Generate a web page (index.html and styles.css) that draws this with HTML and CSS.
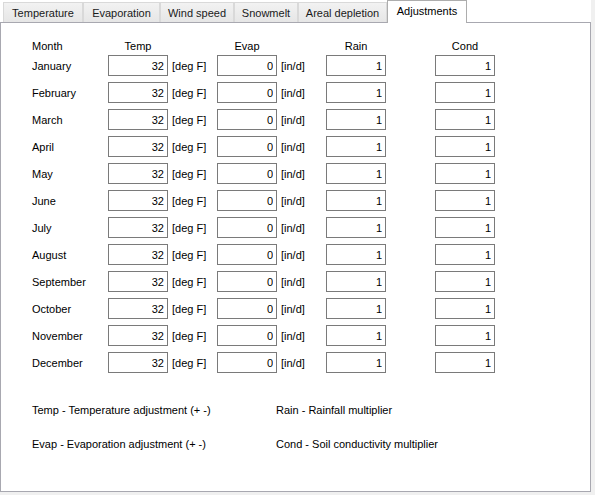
FILE: index.html
```html
<!DOCTYPE html>
<html lang="en">
<head>
	<meta charset="UTF-8">
	<title>Adjustments</title>
	<link rel="stylesheet" href="styles.css">
</head>
<body>
	<div id="window">
		<ul id="tabs">
			<li class="t-temp">Temperature</li>
			<li class="t-evap">Evaporation</li>
			<li class="t-wind">Wind speed</li>
			<li class="t-snow">Snowmelt</li>
			<li class="t-areal">Areal depletion</li>
			<li class="t-adj active">Adjustments</li>
		</ul>
		<div id="panel">
			<div class="grid">
				<span class="head month">Month</span>
				<span class="head">Temp</span>
				<span></span>
				<span class="head">Evap</span>
				<span></span>
				<span class="head">Rain</span>
				<span></span>
				<span class="head">Cond</span>

				<span class="label">January</span>
				<input class="num" value="32"><span class="unit">[deg F]</span>
				<input class="num" value="0"><span class="unit">[in/d]</span>
				<input class="num" value="1"><span></span>
				<input class="num" value="1">

				<span class="label">February</span>
				<input class="num" value="32"><span class="unit">[deg F]</span>
				<input class="num" value="0"><span class="unit">[in/d]</span>
				<input class="num" value="1"><span></span>
				<input class="num" value="1">

				<span class="label">March</span>
				<input class="num" value="32"><span class="unit">[deg F]</span>
				<input class="num" value="0"><span class="unit">[in/d]</span>
				<input class="num" value="1"><span></span>
				<input class="num" value="1">

				<span class="label">April</span>
				<input class="num" value="32"><span class="unit">[deg F]</span>
				<input class="num" value="0"><span class="unit">[in/d]</span>
				<input class="num" value="1"><span></span>
				<input class="num" value="1">

				<span class="label">May</span>
				<input class="num" value="32"><span class="unit">[deg F]</span>
				<input class="num" value="0"><span class="unit">[in/d]</span>
				<input class="num" value="1"><span></span>
				<input class="num" value="1">

				<span class="label">June</span>
				<input class="num" value="32"><span class="unit">[deg F]</span>
				<input class="num" value="0"><span class="unit">[in/d]</span>
				<input class="num" value="1"><span></span>
				<input class="num" value="1">

				<span class="label">July</span>
				<input class="num" value="32"><span class="unit">[deg F]</span>
				<input class="num" value="0"><span class="unit">[in/d]</span>
				<input class="num" value="1"><span></span>
				<input class="num" value="1">

				<span class="label">August</span>
				<input class="num" value="32"><span class="unit">[deg F]</span>
				<input class="num" value="0"><span class="unit">[in/d]</span>
				<input class="num" value="1"><span></span>
				<input class="num" value="1">

				<span class="label">September</span>
				<input class="num" value="32"><span class="unit">[deg F]</span>
				<input class="num" value="0"><span class="unit">[in/d]</span>
				<input class="num" value="1"><span></span>
				<input class="num" value="1">

				<span class="label">October</span>
				<input class="num" value="32"><span class="unit">[deg F]</span>
				<input class="num" value="0"><span class="unit">[in/d]</span>
				<input class="num" value="1"><span></span>
				<input class="num" value="1">

				<span class="label">November</span>
				<input class="num" value="32"><span class="unit">[deg F]</span>
				<input class="num" value="0"><span class="unit">[in/d]</span>
				<input class="num" value="1"><span></span>
				<input class="num" value="1">

				<span class="label">December</span>
				<input class="num" value="32"><span class="unit">[deg F]</span>
				<input class="num" value="0"><span class="unit">[in/d]</span>
				<input class="num" value="1"><span></span>
				<input class="num" value="1">
			</div>
			<div class="notes">
				<span>Temp - Temperature adjustment (+ -)</span>
				<span>Rain - Rainfall multiplier</span>
				<span>Evap - Evaporation adjustment (+ -)</span>
				<span>Cond - Soil conductivity multiplier</span>
			</div>
		</div>
	</div>
</body>
</html>
```

FILE: styles.css
```css
html, body {
	margin: 0;
	padding: 0;
}
body {
	width: 595px;
	height: 495px;
	background: #f0f0f0;
	font-size: 11px;
	font-family: "Liberation Sans", Arial, sans-serif;
	color: #000;
}
#window {
	width: 591px;
	background: #fff;
}
#tabs {
	display: flex;
	align-items: flex-end;
	height: 22px;
	margin: 0;
	padding: 0 0 0 3px;
	list-style: none;
	background: #fff;
}
#tabs li {
	box-sizing: border-box;
	height: 20px;
	border: 1px solid #d9d9d9;
	border-bottom: none;
	background: linear-gradient(#f2f2f2, #e6e6e6);
	line-height: 20px;
	text-align: center;
	white-space: nowrap;
	color: #1a1a1a;
}
#tabs .t-temp { width: 80px; }
#tabs .t-evap { width: 77px; }
#tabs .t-wind { width: 74px; }
#tabs .t-snow { width: 64px; }
#tabs .t-areal { width: 89px; }
#tabs .t-adj { width: 80px; }
#tabs li.active {
	position: relative;
	height: 23px;
	margin-bottom: -1px;
	border-color: #adadad;
	background: #fff;
	line-height: 20px;
	color: #000;
}
#panel {
	box-sizing: border-box;
	height: 470px;
	padding: 12px 0 0 31px;
	border: 1px solid #a8a8b0;
	background: #fff;
}
.grid {
	display: grid;
	grid-template-columns: 76px 60px 49px 60px 49px 60px 49px 60px;
	grid-template-rows: 14px;
	grid-auto-rows: 21px;
	row-gap: 6px;
	align-items: center;
}
.grid .head {
	align-self: end;
	margin-bottom: -4px;
	line-height: 14px;
	text-align: center;
}
.grid .month {
	text-align: left;
}
.label {
	line-height: 14px;
}
.unit {
	padding-left: 4px;
	line-height: 14px;
}
.num {
	box-sizing: border-box;
	width: 60px;
	height: 21px;
	margin: 0;
	padding: 0 3px 0 0;
	border: 1px solid #7a7a7a;
	border-radius: 0;
	background: #fff;
	font: inherit;
	color: #000;
	text-align: right;
	outline: none;
}
.notes {
	display: grid;
	grid-template-columns: 244px auto;
	grid-auto-rows: 14px;
	row-gap: 20px;
	margin-top: 30px;
	line-height: 14px;
}
```
